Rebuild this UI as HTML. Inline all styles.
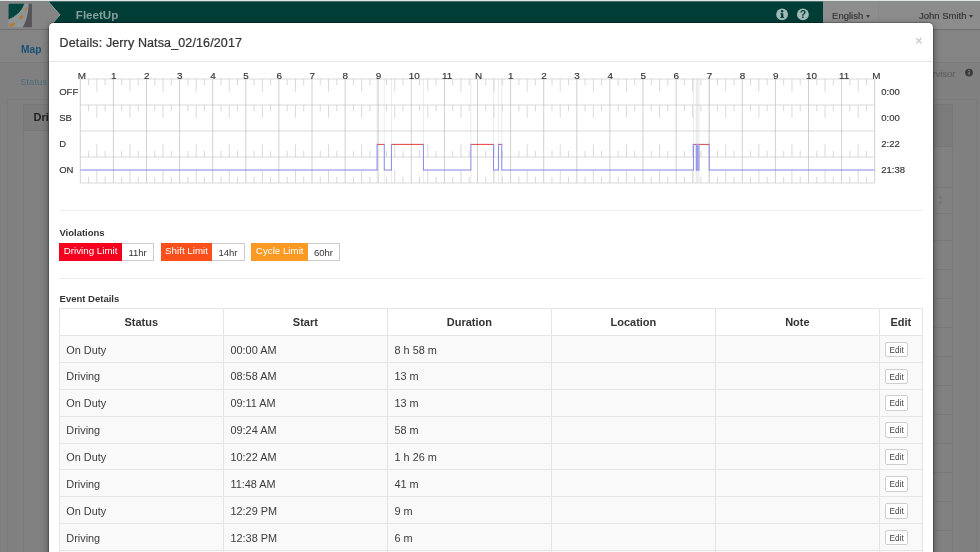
<!DOCTYPE html>
<html><head><meta charset="utf-8"><title>FleetUp</title>
<style>
html,body{margin:0;padding:0}
body{width:980px;height:552px;overflow:hidden;position:relative;background:#808080;font-family:"Liberation Sans",sans-serif;color:#333}
.abs{position:absolute}
#topstrip{left:0;top:0;width:980px;height:2px;background:linear-gradient(to bottom,#e1e6e6 0,#e1e6e6 1px,rgba(225,230,230,0.3) 1px,rgba(225,230,230,0.3) 2px)}
#nav{left:0;top:1.2px;width:980px;height:28.3px;background:#003d37}
#navline{left:0;top:29px;width:980px;height:2px;background:linear-gradient(to bottom,#707070 0,#707070 1px,#777 1px,#777 2px)}
#logo{left:0;top:0;width:62px;height:28.3px}
#brand{left:75.8px;top:8.2px;font-size:11.6px;font-weight:bold;color:#86a09c;line-height:14px;white-space:nowrap}
#lang{left:823.3px;top:0;width:55px;height:28.3px;background:#8e8e8e}
#user{left:878.3px;top:0;width:101.7px;height:28.3px;background:#8c8c8c;border-left:0.7px solid #888}
.navtxt{font-size:9.5px;color:#333;-webkit-text-stroke:0.15px #333;line-height:12px;white-space:nowrap;top:9.1px}
.caret{display:inline-block;width:0;height:0;border-left:2.6px solid transparent;border-right:2.6px solid transparent;border-top:3px solid #3c3c3c;vertical-align:middle;margin-left:2.5px}
#subnav{left:0;top:30.2px;width:980px;height:31.5px;background:#848484}
#subline{left:0;top:61.7px;width:980px;height:0.8px;background:#7a7a7a}
#map{left:21px;top:44.2px;font-size:10.2px;font-weight:bold;color:#1a5078;line-height:12px}
#status{left:20px;top:75.8px;font-size:9.5px;color:#4f6d7c;line-height:12px}
#sup{left:855px;width:100.5px;text-align:right;top:67.8px;font-size:9.5px;color:#606060;-webkit-text-stroke:0.15px #606060;line-height:12px}
#panel{left:7px;top:99px;width:967.5px;height:470px;border:0.8px solid #7a7a7a;background:#808080}
#inner{left:22.5px;top:103.8px;width:928.4px;height:470px;border:0.8px solid #797979;background:#818181}
#ihead{left:22.5px;top:103.8px;width:40px;height:25.2px;background:#7c7c7c;border:0.8px solid #777}
#ihead2{left:920px;top:103.8px;width:30.9px;height:41.2px;background:#7b7b7b;border:0.8px solid #777}
.rline{left:920px;width:31.7px;height:0.8px;background:#797979}
#dri{left:33.6px;top:110.5px;font-size:11px;font-weight:bold;color:#222;line-height:13px}
#modal{left:49.2px;top:22.8px;width:883.8px;height:560px;background:#fff;border-radius:4.2px;box-shadow:0 2px 7px rgba(0,0,0,.5),0 0 0 0.7px rgba(0,0,0,.25)}
#title{left:59.6px;top:36.4px;font-size:12.5px;letter-spacing:0.126px;color:#333;line-height:15px;white-space:nowrap;font-weight:normal;margin:0;-webkit-text-stroke:0.22px #333}
#close{left:915.2px;top:34.2px;font-size:12.4px;font-weight:bold;color:#cbcbcb;line-height:15px}
.hr{height:0.8px;background:#ededed}
.hl{font-size:9.9px;fill:#333;stroke:#333;stroke-width:0.15px;font-family:"Liberation Sans",sans-serif}
.rl{font-size:9.5px;fill:#333;stroke:#333;stroke-width:0.15px;font-family:"Liberation Sans",sans-serif}
.h5{font-size:9.5px;font-weight:bold;color:#333;line-height:12px;white-space:nowrap;margin:0}
.bd{top:242.8px;height:18px;color:#fff;font-size:9.75px;line-height:16.2px;text-align:center;white-space:nowrap}
.bx{top:242.8px;height:16.6px;border:0.7px solid #ccc;border-left:none;background:#fff;color:#333;font-size:9.5px;line-height:17.4px;text-align:center;white-space:nowrap}
table{position:absolute;left:58.7px;top:308.4px;border-collapse:collapse;table-layout:fixed;width:863px;font-size:10.9px;color:#333}
th,td{border:0.8px solid #e5e5e5;padding:0 0 0 6.6px;height:26.1px;box-sizing:border-box;white-space:nowrap;overflow:hidden}
th{font-size:11px;font-weight:bold;text-align:center;padding:0.4px 0 0 0;height:26.6px;background:#fff}
td{background:#f9f9f9;height:26.9px;padding-top:1.2px;color:#3c3c3c}
td.ec{padding:0 0 0 5.4px}
.eb{display:inline-block;width:20.8px;height:13.6px;border:0.7px solid #cfcfcf;border-radius:2px;background:#fff;font-size:8.2px;line-height:15.4px;text-align:center;color:#444;vertical-align:middle;position:relative;top:0.5px;overflow:hidden}
</style></head><body><div id="wrap" style="position:absolute;left:0;top:0;width:980px;height:552px;overflow:hidden;will-change:transform;filter:blur(0.35px)">
<div class="abs" id="nav"></div>
<div class="abs" id="topstrip"></div>
<div class="abs" id="navline"></div>
<svg class="abs" id="logo" style="top:1.2px" width="62" height="28.3" viewBox="0 0 62 28.3">
<polygon points="0,0 47.8,0 60,13.8 47.8,28.3 0,28.3" fill="#858585"/>
<polyline points="47.8,0 60,13.8 47.8,28.3" fill="none" stroke="#9aa5a3" stroke-width="0.9"/>
<g transform="translate(8.55,2.8)">
<path d="M1.2,0 H15.9 Q12.5,10.5 0,15.8 V1.2 Q0,0 1.2,0 Z" fill="#00463f"/>
<path d="M15.9,0 H20.2 Q20,13 14.4,23.5 H0 V15.8 Q12.5,10.5 15.9,0 Z" fill="#8d9695"/>
<path d="M20.2,0 H23.4 V23.5 H14.4 Q20,13 20.2,0 Z" fill="#565458"/>
<ellipse cx="17.3" cy="5.2" rx="0.9" ry="2.1" transform="rotate(14 17.3 5.2)" fill="#b9762f"/>
<ellipse cx="12.8" cy="13.4" rx="1.5" ry="2.4" transform="rotate(38 12.8 13.4)" fill="#b9762f"/>
<ellipse cx="3.6" cy="21" rx="3.2" ry="1.5" transform="rotate(-22 3.6 21)" fill="#b9762f"/>
</g>
</svg>
<div class="abs" id="brand">FleetUp</div>
<svg class="abs" style="left:774px;top:7.3px" width="38" height="15" viewBox="0 0 38 15">
<circle cx="8.1" cy="7.4" r="5.9" fill="#a3bbb7"/><rect x="7.1" y="6.3" width="2.2" height="4.4" fill="#003d37"/><rect x="6.3" y="6.3" width="1.8" height="1" fill="#003d37"/><rect x="6.2" y="9.9" width="3.9" height="1" fill="#003d37"/><circle cx="8.1" cy="4.3" r="1.25" fill="#003d37"/>
<circle cx="28.9" cy="7.4" r="5.9" fill="#a3bbb7"/><text x="28.9" y="11.2" text-anchor="middle" font-size="10.6" font-weight="bold" font-family="Liberation Sans, sans-serif" fill="#003d37">?</text>
</svg>
<div class="abs" id="lang" style="top:1.2px"><span class="abs navtxt" style="left:8.8px">English<span class="caret"></span></span></div>
<div class="abs" id="user" style="top:1.2px"><span class="abs navtxt" style="left:39.6px">John Smith<span class="caret"></span></span></div>
<div class="abs" id="subnav"></div>
<div class="abs" id="subline"></div>
<div class="abs" id="map">Map</div>
<div class="abs" id="status">Status</div>
<div class="abs" id="sup">Supervisor</div>
<svg class="abs" style="left:964px;top:68px" width="10" height="10" viewBox="0 0 10 10"><circle cx="5" cy="4.6" r="3.9" fill="#3c3c3c"/><rect x="4.4" y="3.9" width="1.3" height="2.8" fill="#808080"/><circle cx="5" cy="2.6" r="0.8" fill="#808080"/></svg>
<div class="abs" id="panel"></div>
<div class="abs" id="inner"></div>
<div class="abs" id="ihead"></div><div class="abs" id="ihead2"></div><div class="abs rline" style="top:186.5px"></div><div class="abs rline" style="top:212.6px"></div><div class="abs rline" style="top:240px"></div><div class="abs rline" style="top:269px"></div><div class="abs rline" style="top:298px"></div><div class="abs rline" style="top:327px"></div><div class="abs rline" style="top:356px"></div><div class="abs rline" style="top:385px"></div><div class="abs rline" style="top:414px"></div><div class="abs rline" style="top:443px"></div><div class="abs rline" style="top:472px"></div><div class="abs rline" style="top:501px"></div><div class="abs rline" style="top:530px"></div><svg class="abs" style="left:937px;top:194px" width="7" height="12" viewBox="0 0 7 12"><path d="M3.5,1.5 L5.8,4.8 H1.2 Z M3.5,10.5 L5.8,7.2 H1.2 Z" fill="#757575"/></svg>
<div class="abs" id="dri">Driver</div>
<div class="abs" id="modal"></div>
<h4 class="abs" id="title">Details: Jerry Natsa_02/16/2017</h4>
<div class="abs" id="close">×</div>
<div class="abs hr" style="left:49.2px;top:61.4px;width:883.8px;background:#e6e6e6"></div>
<svg class="chart" width="980" height="200" viewBox="0 0 980 200" style="position:absolute;left:0;top:0">
<line x1="377.10" y1="79.0" x2="377.10" y2="183.0" stroke="#e6e6e6" stroke-width="0.75"/>
<line x1="384.27" y1="79.0" x2="384.27" y2="183.0" stroke="#e6e6e6" stroke-width="0.75"/>
<line x1="391.44" y1="79.0" x2="391.44" y2="183.0" stroke="#e6e6e6" stroke-width="0.75"/>
<line x1="423.44" y1="79.0" x2="423.44" y2="183.0" stroke="#e6e6e6" stroke-width="0.75"/>
<line x1="470.88" y1="79.0" x2="470.88" y2="183.0" stroke="#e6e6e6" stroke-width="0.75"/>
<line x1="493.50" y1="79.0" x2="493.50" y2="183.0" stroke="#e6e6e6" stroke-width="0.75"/>
<line x1="498.46" y1="79.0" x2="498.46" y2="183.0" stroke="#e6e6e6" stroke-width="0.75"/>
<line x1="501.77" y1="79.0" x2="501.77" y2="183.0" stroke="#e6e6e6" stroke-width="0.75"/>
<line x1="693.48" y1="79.0" x2="693.48" y2="183.0" stroke="#e6e6e6" stroke-width="0.75"/>
<line x1="696.24" y1="79.0" x2="696.24" y2="183.0" stroke="#e6e6e6" stroke-width="0.75"/>
<line x1="697.06" y1="79.0" x2="697.06" y2="183.0" stroke="#e6e6e6" stroke-width="0.75"/>
<line x1="697.89" y1="79.0" x2="697.89" y2="183.0" stroke="#e6e6e6" stroke-width="0.75"/>
<line x1="698.99" y1="79.0" x2="698.99" y2="183.0" stroke="#e6e6e6" stroke-width="0.75"/>
<line x1="709.20" y1="79.0" x2="709.20" y2="183.0" stroke="#e6e6e6" stroke-width="0.75"/>
<line x1="80.3" y1="79.0" x2="874.70" y2="79.0" stroke="#cccccc" stroke-width="0.75"/>
<line x1="80.3" y1="105.0" x2="874.70" y2="105.0" stroke="#cccccc" stroke-width="0.75"/>
<line x1="80.3" y1="131.0" x2="874.70" y2="131.0" stroke="#cccccc" stroke-width="0.75"/>
<line x1="80.3" y1="157.0" x2="874.70" y2="157.0" stroke="#cccccc" stroke-width="0.75"/>
<line x1="80.3" y1="183.0" x2="874.70" y2="183.0" stroke="#cccccc" stroke-width="0.75"/>
<line x1="80.30" y1="79.0" x2="80.30" y2="183.0" stroke="#c2c2c2" stroke-width="0.75"/>
<line x1="113.40" y1="79.0" x2="113.40" y2="183.0" stroke="#c2c2c2" stroke-width="0.75"/>
<line x1="146.50" y1="79.0" x2="146.50" y2="183.0" stroke="#c2c2c2" stroke-width="0.75"/>
<line x1="179.60" y1="79.0" x2="179.60" y2="183.0" stroke="#c2c2c2" stroke-width="0.75"/>
<line x1="212.70" y1="79.0" x2="212.70" y2="183.0" stroke="#c2c2c2" stroke-width="0.75"/>
<line x1="245.80" y1="79.0" x2="245.80" y2="183.0" stroke="#c2c2c2" stroke-width="0.75"/>
<line x1="278.90" y1="79.0" x2="278.90" y2="183.0" stroke="#c2c2c2" stroke-width="0.75"/>
<line x1="312.00" y1="79.0" x2="312.00" y2="183.0" stroke="#c2c2c2" stroke-width="0.75"/>
<line x1="345.10" y1="79.0" x2="345.10" y2="183.0" stroke="#c2c2c2" stroke-width="0.75"/>
<line x1="378.20" y1="79.0" x2="378.20" y2="183.0" stroke="#c2c2c2" stroke-width="0.75"/>
<line x1="411.30" y1="79.0" x2="411.30" y2="183.0" stroke="#c2c2c2" stroke-width="0.75"/>
<line x1="444.40" y1="79.0" x2="444.40" y2="183.0" stroke="#c2c2c2" stroke-width="0.75"/>
<line x1="477.50" y1="79.0" x2="477.50" y2="183.0" stroke="#c2c2c2" stroke-width="0.75"/>
<line x1="510.60" y1="79.0" x2="510.60" y2="183.0" stroke="#c2c2c2" stroke-width="0.75"/>
<line x1="543.70" y1="79.0" x2="543.70" y2="183.0" stroke="#c2c2c2" stroke-width="0.75"/>
<line x1="576.80" y1="79.0" x2="576.80" y2="183.0" stroke="#c2c2c2" stroke-width="0.75"/>
<line x1="609.90" y1="79.0" x2="609.90" y2="183.0" stroke="#c2c2c2" stroke-width="0.75"/>
<line x1="643.00" y1="79.0" x2="643.00" y2="183.0" stroke="#c2c2c2" stroke-width="0.75"/>
<line x1="676.10" y1="79.0" x2="676.10" y2="183.0" stroke="#c2c2c2" stroke-width="0.75"/>
<line x1="709.20" y1="79.0" x2="709.20" y2="183.0" stroke="#c2c2c2" stroke-width="0.75"/>
<line x1="742.30" y1="79.0" x2="742.30" y2="183.0" stroke="#c2c2c2" stroke-width="0.75"/>
<line x1="775.40" y1="79.0" x2="775.40" y2="183.0" stroke="#c2c2c2" stroke-width="0.75"/>
<line x1="808.50" y1="79.0" x2="808.50" y2="183.0" stroke="#c2c2c2" stroke-width="0.75"/>
<line x1="841.60" y1="79.0" x2="841.60" y2="183.0" stroke="#c2c2c2" stroke-width="0.75"/>
<line x1="874.70" y1="79.0" x2="874.70" y2="183.0" stroke="#c2c2c2" stroke-width="0.75"/>
<line x1="88.58" y1="79.00" x2="88.58" y2="85.30" stroke="#cdcdcd" stroke-width="0.75"/>
<line x1="88.58" y1="105.00" x2="88.58" y2="111.30" stroke="#cdcdcd" stroke-width="0.75"/>
<line x1="88.58" y1="157.00" x2="88.58" y2="150.70" stroke="#cdcdcd" stroke-width="0.75"/>
<line x1="88.58" y1="183.00" x2="88.58" y2="176.70" stroke="#cdcdcd" stroke-width="0.75"/>
<line x1="96.85" y1="79.00" x2="96.85" y2="91.70" stroke="#cdcdcd" stroke-width="0.75"/>
<line x1="96.85" y1="105.00" x2="96.85" y2="117.70" stroke="#cdcdcd" stroke-width="0.75"/>
<line x1="96.85" y1="157.00" x2="96.85" y2="144.30" stroke="#cdcdcd" stroke-width="0.75"/>
<line x1="96.85" y1="183.00" x2="96.85" y2="170.30" stroke="#cdcdcd" stroke-width="0.75"/>
<line x1="105.12" y1="79.00" x2="105.12" y2="85.30" stroke="#cdcdcd" stroke-width="0.75"/>
<line x1="105.12" y1="105.00" x2="105.12" y2="111.30" stroke="#cdcdcd" stroke-width="0.75"/>
<line x1="105.12" y1="157.00" x2="105.12" y2="150.70" stroke="#cdcdcd" stroke-width="0.75"/>
<line x1="105.12" y1="183.00" x2="105.12" y2="176.70" stroke="#cdcdcd" stroke-width="0.75"/>
<line x1="121.67" y1="79.00" x2="121.67" y2="85.30" stroke="#cdcdcd" stroke-width="0.75"/>
<line x1="121.67" y1="105.00" x2="121.67" y2="111.30" stroke="#cdcdcd" stroke-width="0.75"/>
<line x1="121.67" y1="157.00" x2="121.67" y2="150.70" stroke="#cdcdcd" stroke-width="0.75"/>
<line x1="121.67" y1="183.00" x2="121.67" y2="176.70" stroke="#cdcdcd" stroke-width="0.75"/>
<line x1="129.95" y1="79.00" x2="129.95" y2="91.70" stroke="#cdcdcd" stroke-width="0.75"/>
<line x1="129.95" y1="105.00" x2="129.95" y2="117.70" stroke="#cdcdcd" stroke-width="0.75"/>
<line x1="129.95" y1="157.00" x2="129.95" y2="144.30" stroke="#cdcdcd" stroke-width="0.75"/>
<line x1="129.95" y1="183.00" x2="129.95" y2="170.30" stroke="#cdcdcd" stroke-width="0.75"/>
<line x1="138.22" y1="79.00" x2="138.22" y2="85.30" stroke="#cdcdcd" stroke-width="0.75"/>
<line x1="138.22" y1="105.00" x2="138.22" y2="111.30" stroke="#cdcdcd" stroke-width="0.75"/>
<line x1="138.22" y1="157.00" x2="138.22" y2="150.70" stroke="#cdcdcd" stroke-width="0.75"/>
<line x1="138.22" y1="183.00" x2="138.22" y2="176.70" stroke="#cdcdcd" stroke-width="0.75"/>
<line x1="154.78" y1="79.00" x2="154.78" y2="85.30" stroke="#cdcdcd" stroke-width="0.75"/>
<line x1="154.78" y1="105.00" x2="154.78" y2="111.30" stroke="#cdcdcd" stroke-width="0.75"/>
<line x1="154.78" y1="157.00" x2="154.78" y2="150.70" stroke="#cdcdcd" stroke-width="0.75"/>
<line x1="154.78" y1="183.00" x2="154.78" y2="176.70" stroke="#cdcdcd" stroke-width="0.75"/>
<line x1="163.05" y1="79.00" x2="163.05" y2="91.70" stroke="#cdcdcd" stroke-width="0.75"/>
<line x1="163.05" y1="105.00" x2="163.05" y2="117.70" stroke="#cdcdcd" stroke-width="0.75"/>
<line x1="163.05" y1="157.00" x2="163.05" y2="144.30" stroke="#cdcdcd" stroke-width="0.75"/>
<line x1="163.05" y1="183.00" x2="163.05" y2="170.30" stroke="#cdcdcd" stroke-width="0.75"/>
<line x1="171.32" y1="79.00" x2="171.32" y2="85.30" stroke="#cdcdcd" stroke-width="0.75"/>
<line x1="171.32" y1="105.00" x2="171.32" y2="111.30" stroke="#cdcdcd" stroke-width="0.75"/>
<line x1="171.32" y1="157.00" x2="171.32" y2="150.70" stroke="#cdcdcd" stroke-width="0.75"/>
<line x1="171.32" y1="183.00" x2="171.32" y2="176.70" stroke="#cdcdcd" stroke-width="0.75"/>
<line x1="187.88" y1="79.00" x2="187.88" y2="85.30" stroke="#cdcdcd" stroke-width="0.75"/>
<line x1="187.88" y1="105.00" x2="187.88" y2="111.30" stroke="#cdcdcd" stroke-width="0.75"/>
<line x1="187.88" y1="157.00" x2="187.88" y2="150.70" stroke="#cdcdcd" stroke-width="0.75"/>
<line x1="187.88" y1="183.00" x2="187.88" y2="176.70" stroke="#cdcdcd" stroke-width="0.75"/>
<line x1="196.15" y1="79.00" x2="196.15" y2="91.70" stroke="#cdcdcd" stroke-width="0.75"/>
<line x1="196.15" y1="105.00" x2="196.15" y2="117.70" stroke="#cdcdcd" stroke-width="0.75"/>
<line x1="196.15" y1="157.00" x2="196.15" y2="144.30" stroke="#cdcdcd" stroke-width="0.75"/>
<line x1="196.15" y1="183.00" x2="196.15" y2="170.30" stroke="#cdcdcd" stroke-width="0.75"/>
<line x1="204.43" y1="79.00" x2="204.43" y2="85.30" stroke="#cdcdcd" stroke-width="0.75"/>
<line x1="204.43" y1="105.00" x2="204.43" y2="111.30" stroke="#cdcdcd" stroke-width="0.75"/>
<line x1="204.43" y1="157.00" x2="204.43" y2="150.70" stroke="#cdcdcd" stroke-width="0.75"/>
<line x1="204.43" y1="183.00" x2="204.43" y2="176.70" stroke="#cdcdcd" stroke-width="0.75"/>
<line x1="220.98" y1="79.00" x2="220.98" y2="85.30" stroke="#cdcdcd" stroke-width="0.75"/>
<line x1="220.98" y1="105.00" x2="220.98" y2="111.30" stroke="#cdcdcd" stroke-width="0.75"/>
<line x1="220.98" y1="157.00" x2="220.98" y2="150.70" stroke="#cdcdcd" stroke-width="0.75"/>
<line x1="220.98" y1="183.00" x2="220.98" y2="176.70" stroke="#cdcdcd" stroke-width="0.75"/>
<line x1="229.25" y1="79.00" x2="229.25" y2="91.70" stroke="#cdcdcd" stroke-width="0.75"/>
<line x1="229.25" y1="105.00" x2="229.25" y2="117.70" stroke="#cdcdcd" stroke-width="0.75"/>
<line x1="229.25" y1="157.00" x2="229.25" y2="144.30" stroke="#cdcdcd" stroke-width="0.75"/>
<line x1="229.25" y1="183.00" x2="229.25" y2="170.30" stroke="#cdcdcd" stroke-width="0.75"/>
<line x1="237.52" y1="79.00" x2="237.52" y2="85.30" stroke="#cdcdcd" stroke-width="0.75"/>
<line x1="237.52" y1="105.00" x2="237.52" y2="111.30" stroke="#cdcdcd" stroke-width="0.75"/>
<line x1="237.52" y1="157.00" x2="237.52" y2="150.70" stroke="#cdcdcd" stroke-width="0.75"/>
<line x1="237.52" y1="183.00" x2="237.52" y2="176.70" stroke="#cdcdcd" stroke-width="0.75"/>
<line x1="254.07" y1="79.00" x2="254.07" y2="85.30" stroke="#cdcdcd" stroke-width="0.75"/>
<line x1="254.07" y1="105.00" x2="254.07" y2="111.30" stroke="#cdcdcd" stroke-width="0.75"/>
<line x1="254.07" y1="157.00" x2="254.07" y2="150.70" stroke="#cdcdcd" stroke-width="0.75"/>
<line x1="254.07" y1="183.00" x2="254.07" y2="176.70" stroke="#cdcdcd" stroke-width="0.75"/>
<line x1="262.35" y1="79.00" x2="262.35" y2="91.70" stroke="#cdcdcd" stroke-width="0.75"/>
<line x1="262.35" y1="105.00" x2="262.35" y2="117.70" stroke="#cdcdcd" stroke-width="0.75"/>
<line x1="262.35" y1="157.00" x2="262.35" y2="144.30" stroke="#cdcdcd" stroke-width="0.75"/>
<line x1="262.35" y1="183.00" x2="262.35" y2="170.30" stroke="#cdcdcd" stroke-width="0.75"/>
<line x1="270.62" y1="79.00" x2="270.62" y2="85.30" stroke="#cdcdcd" stroke-width="0.75"/>
<line x1="270.62" y1="105.00" x2="270.62" y2="111.30" stroke="#cdcdcd" stroke-width="0.75"/>
<line x1="270.62" y1="157.00" x2="270.62" y2="150.70" stroke="#cdcdcd" stroke-width="0.75"/>
<line x1="270.62" y1="183.00" x2="270.62" y2="176.70" stroke="#cdcdcd" stroke-width="0.75"/>
<line x1="287.18" y1="79.00" x2="287.18" y2="85.30" stroke="#cdcdcd" stroke-width="0.75"/>
<line x1="287.18" y1="105.00" x2="287.18" y2="111.30" stroke="#cdcdcd" stroke-width="0.75"/>
<line x1="287.18" y1="157.00" x2="287.18" y2="150.70" stroke="#cdcdcd" stroke-width="0.75"/>
<line x1="287.18" y1="183.00" x2="287.18" y2="176.70" stroke="#cdcdcd" stroke-width="0.75"/>
<line x1="295.45" y1="79.00" x2="295.45" y2="91.70" stroke="#cdcdcd" stroke-width="0.75"/>
<line x1="295.45" y1="105.00" x2="295.45" y2="117.70" stroke="#cdcdcd" stroke-width="0.75"/>
<line x1="295.45" y1="157.00" x2="295.45" y2="144.30" stroke="#cdcdcd" stroke-width="0.75"/>
<line x1="295.45" y1="183.00" x2="295.45" y2="170.30" stroke="#cdcdcd" stroke-width="0.75"/>
<line x1="303.73" y1="79.00" x2="303.73" y2="85.30" stroke="#cdcdcd" stroke-width="0.75"/>
<line x1="303.73" y1="105.00" x2="303.73" y2="111.30" stroke="#cdcdcd" stroke-width="0.75"/>
<line x1="303.73" y1="157.00" x2="303.73" y2="150.70" stroke="#cdcdcd" stroke-width="0.75"/>
<line x1="303.73" y1="183.00" x2="303.73" y2="176.70" stroke="#cdcdcd" stroke-width="0.75"/>
<line x1="320.28" y1="79.00" x2="320.28" y2="85.30" stroke="#cdcdcd" stroke-width="0.75"/>
<line x1="320.28" y1="105.00" x2="320.28" y2="111.30" stroke="#cdcdcd" stroke-width="0.75"/>
<line x1="320.28" y1="157.00" x2="320.28" y2="150.70" stroke="#cdcdcd" stroke-width="0.75"/>
<line x1="320.28" y1="183.00" x2="320.28" y2="176.70" stroke="#cdcdcd" stroke-width="0.75"/>
<line x1="328.55" y1="79.00" x2="328.55" y2="91.70" stroke="#cdcdcd" stroke-width="0.75"/>
<line x1="328.55" y1="105.00" x2="328.55" y2="117.70" stroke="#cdcdcd" stroke-width="0.75"/>
<line x1="328.55" y1="157.00" x2="328.55" y2="144.30" stroke="#cdcdcd" stroke-width="0.75"/>
<line x1="328.55" y1="183.00" x2="328.55" y2="170.30" stroke="#cdcdcd" stroke-width="0.75"/>
<line x1="336.83" y1="79.00" x2="336.83" y2="85.30" stroke="#cdcdcd" stroke-width="0.75"/>
<line x1="336.83" y1="105.00" x2="336.83" y2="111.30" stroke="#cdcdcd" stroke-width="0.75"/>
<line x1="336.83" y1="157.00" x2="336.83" y2="150.70" stroke="#cdcdcd" stroke-width="0.75"/>
<line x1="336.83" y1="183.00" x2="336.83" y2="176.70" stroke="#cdcdcd" stroke-width="0.75"/>
<line x1="353.38" y1="79.00" x2="353.38" y2="85.30" stroke="#cdcdcd" stroke-width="0.75"/>
<line x1="353.38" y1="105.00" x2="353.38" y2="111.30" stroke="#cdcdcd" stroke-width="0.75"/>
<line x1="353.38" y1="157.00" x2="353.38" y2="150.70" stroke="#cdcdcd" stroke-width="0.75"/>
<line x1="353.38" y1="183.00" x2="353.38" y2="176.70" stroke="#cdcdcd" stroke-width="0.75"/>
<line x1="361.65" y1="79.00" x2="361.65" y2="91.70" stroke="#cdcdcd" stroke-width="0.75"/>
<line x1="361.65" y1="105.00" x2="361.65" y2="117.70" stroke="#cdcdcd" stroke-width="0.75"/>
<line x1="361.65" y1="157.00" x2="361.65" y2="144.30" stroke="#cdcdcd" stroke-width="0.75"/>
<line x1="361.65" y1="183.00" x2="361.65" y2="170.30" stroke="#cdcdcd" stroke-width="0.75"/>
<line x1="369.93" y1="79.00" x2="369.93" y2="85.30" stroke="#cdcdcd" stroke-width="0.75"/>
<line x1="369.93" y1="105.00" x2="369.93" y2="111.30" stroke="#cdcdcd" stroke-width="0.75"/>
<line x1="369.93" y1="157.00" x2="369.93" y2="150.70" stroke="#cdcdcd" stroke-width="0.75"/>
<line x1="369.93" y1="183.00" x2="369.93" y2="176.70" stroke="#cdcdcd" stroke-width="0.75"/>
<line x1="386.48" y1="79.00" x2="386.48" y2="85.30" stroke="#cdcdcd" stroke-width="0.75"/>
<line x1="386.48" y1="105.00" x2="386.48" y2="111.30" stroke="#cdcdcd" stroke-width="0.75"/>
<line x1="386.48" y1="157.00" x2="386.48" y2="150.70" stroke="#cdcdcd" stroke-width="0.75"/>
<line x1="386.48" y1="183.00" x2="386.48" y2="176.70" stroke="#cdcdcd" stroke-width="0.75"/>
<line x1="394.75" y1="79.00" x2="394.75" y2="91.70" stroke="#cdcdcd" stroke-width="0.75"/>
<line x1="394.75" y1="105.00" x2="394.75" y2="117.70" stroke="#cdcdcd" stroke-width="0.75"/>
<line x1="394.75" y1="157.00" x2="394.75" y2="144.30" stroke="#cdcdcd" stroke-width="0.75"/>
<line x1="394.75" y1="183.00" x2="394.75" y2="170.30" stroke="#cdcdcd" stroke-width="0.75"/>
<line x1="403.03" y1="79.00" x2="403.03" y2="85.30" stroke="#cdcdcd" stroke-width="0.75"/>
<line x1="403.03" y1="105.00" x2="403.03" y2="111.30" stroke="#cdcdcd" stroke-width="0.75"/>
<line x1="403.03" y1="157.00" x2="403.03" y2="150.70" stroke="#cdcdcd" stroke-width="0.75"/>
<line x1="403.03" y1="183.00" x2="403.03" y2="176.70" stroke="#cdcdcd" stroke-width="0.75"/>
<line x1="419.58" y1="79.00" x2="419.58" y2="85.30" stroke="#cdcdcd" stroke-width="0.75"/>
<line x1="419.58" y1="105.00" x2="419.58" y2="111.30" stroke="#cdcdcd" stroke-width="0.75"/>
<line x1="419.58" y1="157.00" x2="419.58" y2="150.70" stroke="#cdcdcd" stroke-width="0.75"/>
<line x1="419.58" y1="183.00" x2="419.58" y2="176.70" stroke="#cdcdcd" stroke-width="0.75"/>
<line x1="427.85" y1="79.00" x2="427.85" y2="91.70" stroke="#cdcdcd" stroke-width="0.75"/>
<line x1="427.85" y1="105.00" x2="427.85" y2="117.70" stroke="#cdcdcd" stroke-width="0.75"/>
<line x1="427.85" y1="157.00" x2="427.85" y2="144.30" stroke="#cdcdcd" stroke-width="0.75"/>
<line x1="427.85" y1="183.00" x2="427.85" y2="170.30" stroke="#cdcdcd" stroke-width="0.75"/>
<line x1="436.12" y1="79.00" x2="436.12" y2="85.30" stroke="#cdcdcd" stroke-width="0.75"/>
<line x1="436.12" y1="105.00" x2="436.12" y2="111.30" stroke="#cdcdcd" stroke-width="0.75"/>
<line x1="436.12" y1="157.00" x2="436.12" y2="150.70" stroke="#cdcdcd" stroke-width="0.75"/>
<line x1="436.12" y1="183.00" x2="436.12" y2="176.70" stroke="#cdcdcd" stroke-width="0.75"/>
<line x1="452.68" y1="79.00" x2="452.68" y2="85.30" stroke="#cdcdcd" stroke-width="0.75"/>
<line x1="452.68" y1="105.00" x2="452.68" y2="111.30" stroke="#cdcdcd" stroke-width="0.75"/>
<line x1="452.68" y1="157.00" x2="452.68" y2="150.70" stroke="#cdcdcd" stroke-width="0.75"/>
<line x1="452.68" y1="183.00" x2="452.68" y2="176.70" stroke="#cdcdcd" stroke-width="0.75"/>
<line x1="460.95" y1="79.00" x2="460.95" y2="91.70" stroke="#cdcdcd" stroke-width="0.75"/>
<line x1="460.95" y1="105.00" x2="460.95" y2="117.70" stroke="#cdcdcd" stroke-width="0.75"/>
<line x1="460.95" y1="157.00" x2="460.95" y2="144.30" stroke="#cdcdcd" stroke-width="0.75"/>
<line x1="460.95" y1="183.00" x2="460.95" y2="170.30" stroke="#cdcdcd" stroke-width="0.75"/>
<line x1="469.23" y1="79.00" x2="469.23" y2="85.30" stroke="#cdcdcd" stroke-width="0.75"/>
<line x1="469.23" y1="105.00" x2="469.23" y2="111.30" stroke="#cdcdcd" stroke-width="0.75"/>
<line x1="469.23" y1="157.00" x2="469.23" y2="150.70" stroke="#cdcdcd" stroke-width="0.75"/>
<line x1="469.23" y1="183.00" x2="469.23" y2="176.70" stroke="#cdcdcd" stroke-width="0.75"/>
<line x1="485.78" y1="79.00" x2="485.78" y2="85.30" stroke="#cdcdcd" stroke-width="0.75"/>
<line x1="485.78" y1="105.00" x2="485.78" y2="111.30" stroke="#cdcdcd" stroke-width="0.75"/>
<line x1="485.78" y1="157.00" x2="485.78" y2="150.70" stroke="#cdcdcd" stroke-width="0.75"/>
<line x1="485.78" y1="183.00" x2="485.78" y2="176.70" stroke="#cdcdcd" stroke-width="0.75"/>
<line x1="494.05" y1="79.00" x2="494.05" y2="91.70" stroke="#cdcdcd" stroke-width="0.75"/>
<line x1="494.05" y1="105.00" x2="494.05" y2="117.70" stroke="#cdcdcd" stroke-width="0.75"/>
<line x1="494.05" y1="157.00" x2="494.05" y2="144.30" stroke="#cdcdcd" stroke-width="0.75"/>
<line x1="494.05" y1="183.00" x2="494.05" y2="170.30" stroke="#cdcdcd" stroke-width="0.75"/>
<line x1="502.33" y1="79.00" x2="502.33" y2="85.30" stroke="#cdcdcd" stroke-width="0.75"/>
<line x1="502.33" y1="105.00" x2="502.33" y2="111.30" stroke="#cdcdcd" stroke-width="0.75"/>
<line x1="502.33" y1="157.00" x2="502.33" y2="150.70" stroke="#cdcdcd" stroke-width="0.75"/>
<line x1="502.33" y1="183.00" x2="502.33" y2="176.70" stroke="#cdcdcd" stroke-width="0.75"/>
<line x1="518.88" y1="79.00" x2="518.88" y2="85.30" stroke="#cdcdcd" stroke-width="0.75"/>
<line x1="518.88" y1="105.00" x2="518.88" y2="111.30" stroke="#cdcdcd" stroke-width="0.75"/>
<line x1="518.88" y1="157.00" x2="518.88" y2="150.70" stroke="#cdcdcd" stroke-width="0.75"/>
<line x1="518.88" y1="183.00" x2="518.88" y2="176.70" stroke="#cdcdcd" stroke-width="0.75"/>
<line x1="527.15" y1="79.00" x2="527.15" y2="91.70" stroke="#cdcdcd" stroke-width="0.75"/>
<line x1="527.15" y1="105.00" x2="527.15" y2="117.70" stroke="#cdcdcd" stroke-width="0.75"/>
<line x1="527.15" y1="157.00" x2="527.15" y2="144.30" stroke="#cdcdcd" stroke-width="0.75"/>
<line x1="527.15" y1="183.00" x2="527.15" y2="170.30" stroke="#cdcdcd" stroke-width="0.75"/>
<line x1="535.42" y1="79.00" x2="535.42" y2="85.30" stroke="#cdcdcd" stroke-width="0.75"/>
<line x1="535.42" y1="105.00" x2="535.42" y2="111.30" stroke="#cdcdcd" stroke-width="0.75"/>
<line x1="535.42" y1="157.00" x2="535.42" y2="150.70" stroke="#cdcdcd" stroke-width="0.75"/>
<line x1="535.42" y1="183.00" x2="535.42" y2="176.70" stroke="#cdcdcd" stroke-width="0.75"/>
<line x1="551.98" y1="79.00" x2="551.98" y2="85.30" stroke="#cdcdcd" stroke-width="0.75"/>
<line x1="551.98" y1="105.00" x2="551.98" y2="111.30" stroke="#cdcdcd" stroke-width="0.75"/>
<line x1="551.98" y1="157.00" x2="551.98" y2="150.70" stroke="#cdcdcd" stroke-width="0.75"/>
<line x1="551.98" y1="183.00" x2="551.98" y2="176.70" stroke="#cdcdcd" stroke-width="0.75"/>
<line x1="560.25" y1="79.00" x2="560.25" y2="91.70" stroke="#cdcdcd" stroke-width="0.75"/>
<line x1="560.25" y1="105.00" x2="560.25" y2="117.70" stroke="#cdcdcd" stroke-width="0.75"/>
<line x1="560.25" y1="157.00" x2="560.25" y2="144.30" stroke="#cdcdcd" stroke-width="0.75"/>
<line x1="560.25" y1="183.00" x2="560.25" y2="170.30" stroke="#cdcdcd" stroke-width="0.75"/>
<line x1="568.52" y1="79.00" x2="568.52" y2="85.30" stroke="#cdcdcd" stroke-width="0.75"/>
<line x1="568.52" y1="105.00" x2="568.52" y2="111.30" stroke="#cdcdcd" stroke-width="0.75"/>
<line x1="568.52" y1="157.00" x2="568.52" y2="150.70" stroke="#cdcdcd" stroke-width="0.75"/>
<line x1="568.52" y1="183.00" x2="568.52" y2="176.70" stroke="#cdcdcd" stroke-width="0.75"/>
<line x1="585.08" y1="79.00" x2="585.08" y2="85.30" stroke="#cdcdcd" stroke-width="0.75"/>
<line x1="585.08" y1="105.00" x2="585.08" y2="111.30" stroke="#cdcdcd" stroke-width="0.75"/>
<line x1="585.08" y1="157.00" x2="585.08" y2="150.70" stroke="#cdcdcd" stroke-width="0.75"/>
<line x1="585.08" y1="183.00" x2="585.08" y2="176.70" stroke="#cdcdcd" stroke-width="0.75"/>
<line x1="593.35" y1="79.00" x2="593.35" y2="91.70" stroke="#cdcdcd" stroke-width="0.75"/>
<line x1="593.35" y1="105.00" x2="593.35" y2="117.70" stroke="#cdcdcd" stroke-width="0.75"/>
<line x1="593.35" y1="157.00" x2="593.35" y2="144.30" stroke="#cdcdcd" stroke-width="0.75"/>
<line x1="593.35" y1="183.00" x2="593.35" y2="170.30" stroke="#cdcdcd" stroke-width="0.75"/>
<line x1="601.62" y1="79.00" x2="601.62" y2="85.30" stroke="#cdcdcd" stroke-width="0.75"/>
<line x1="601.62" y1="105.00" x2="601.62" y2="111.30" stroke="#cdcdcd" stroke-width="0.75"/>
<line x1="601.62" y1="157.00" x2="601.62" y2="150.70" stroke="#cdcdcd" stroke-width="0.75"/>
<line x1="601.62" y1="183.00" x2="601.62" y2="176.70" stroke="#cdcdcd" stroke-width="0.75"/>
<line x1="618.17" y1="79.00" x2="618.17" y2="85.30" stroke="#cdcdcd" stroke-width="0.75"/>
<line x1="618.17" y1="105.00" x2="618.17" y2="111.30" stroke="#cdcdcd" stroke-width="0.75"/>
<line x1="618.17" y1="157.00" x2="618.17" y2="150.70" stroke="#cdcdcd" stroke-width="0.75"/>
<line x1="618.17" y1="183.00" x2="618.17" y2="176.70" stroke="#cdcdcd" stroke-width="0.75"/>
<line x1="626.45" y1="79.00" x2="626.45" y2="91.70" stroke="#cdcdcd" stroke-width="0.75"/>
<line x1="626.45" y1="105.00" x2="626.45" y2="117.70" stroke="#cdcdcd" stroke-width="0.75"/>
<line x1="626.45" y1="157.00" x2="626.45" y2="144.30" stroke="#cdcdcd" stroke-width="0.75"/>
<line x1="626.45" y1="183.00" x2="626.45" y2="170.30" stroke="#cdcdcd" stroke-width="0.75"/>
<line x1="634.73" y1="79.00" x2="634.73" y2="85.30" stroke="#cdcdcd" stroke-width="0.75"/>
<line x1="634.73" y1="105.00" x2="634.73" y2="111.30" stroke="#cdcdcd" stroke-width="0.75"/>
<line x1="634.73" y1="157.00" x2="634.73" y2="150.70" stroke="#cdcdcd" stroke-width="0.75"/>
<line x1="634.73" y1="183.00" x2="634.73" y2="176.70" stroke="#cdcdcd" stroke-width="0.75"/>
<line x1="651.27" y1="79.00" x2="651.27" y2="85.30" stroke="#cdcdcd" stroke-width="0.75"/>
<line x1="651.27" y1="105.00" x2="651.27" y2="111.30" stroke="#cdcdcd" stroke-width="0.75"/>
<line x1="651.27" y1="157.00" x2="651.27" y2="150.70" stroke="#cdcdcd" stroke-width="0.75"/>
<line x1="651.27" y1="183.00" x2="651.27" y2="176.70" stroke="#cdcdcd" stroke-width="0.75"/>
<line x1="659.55" y1="79.00" x2="659.55" y2="91.70" stroke="#cdcdcd" stroke-width="0.75"/>
<line x1="659.55" y1="105.00" x2="659.55" y2="117.70" stroke="#cdcdcd" stroke-width="0.75"/>
<line x1="659.55" y1="157.00" x2="659.55" y2="144.30" stroke="#cdcdcd" stroke-width="0.75"/>
<line x1="659.55" y1="183.00" x2="659.55" y2="170.30" stroke="#cdcdcd" stroke-width="0.75"/>
<line x1="667.82" y1="79.00" x2="667.82" y2="85.30" stroke="#cdcdcd" stroke-width="0.75"/>
<line x1="667.82" y1="105.00" x2="667.82" y2="111.30" stroke="#cdcdcd" stroke-width="0.75"/>
<line x1="667.82" y1="157.00" x2="667.82" y2="150.70" stroke="#cdcdcd" stroke-width="0.75"/>
<line x1="667.82" y1="183.00" x2="667.82" y2="176.70" stroke="#cdcdcd" stroke-width="0.75"/>
<line x1="684.38" y1="79.00" x2="684.38" y2="85.30" stroke="#cdcdcd" stroke-width="0.75"/>
<line x1="684.38" y1="105.00" x2="684.38" y2="111.30" stroke="#cdcdcd" stroke-width="0.75"/>
<line x1="684.38" y1="157.00" x2="684.38" y2="150.70" stroke="#cdcdcd" stroke-width="0.75"/>
<line x1="684.38" y1="183.00" x2="684.38" y2="176.70" stroke="#cdcdcd" stroke-width="0.75"/>
<line x1="692.65" y1="79.00" x2="692.65" y2="91.70" stroke="#cdcdcd" stroke-width="0.75"/>
<line x1="692.65" y1="105.00" x2="692.65" y2="117.70" stroke="#cdcdcd" stroke-width="0.75"/>
<line x1="692.65" y1="157.00" x2="692.65" y2="144.30" stroke="#cdcdcd" stroke-width="0.75"/>
<line x1="692.65" y1="183.00" x2="692.65" y2="170.30" stroke="#cdcdcd" stroke-width="0.75"/>
<line x1="700.92" y1="79.00" x2="700.92" y2="85.30" stroke="#cdcdcd" stroke-width="0.75"/>
<line x1="700.92" y1="105.00" x2="700.92" y2="111.30" stroke="#cdcdcd" stroke-width="0.75"/>
<line x1="700.92" y1="157.00" x2="700.92" y2="150.70" stroke="#cdcdcd" stroke-width="0.75"/>
<line x1="700.92" y1="183.00" x2="700.92" y2="176.70" stroke="#cdcdcd" stroke-width="0.75"/>
<line x1="717.48" y1="79.00" x2="717.48" y2="85.30" stroke="#cdcdcd" stroke-width="0.75"/>
<line x1="717.48" y1="105.00" x2="717.48" y2="111.30" stroke="#cdcdcd" stroke-width="0.75"/>
<line x1="717.48" y1="157.00" x2="717.48" y2="150.70" stroke="#cdcdcd" stroke-width="0.75"/>
<line x1="717.48" y1="183.00" x2="717.48" y2="176.70" stroke="#cdcdcd" stroke-width="0.75"/>
<line x1="725.75" y1="79.00" x2="725.75" y2="91.70" stroke="#cdcdcd" stroke-width="0.75"/>
<line x1="725.75" y1="105.00" x2="725.75" y2="117.70" stroke="#cdcdcd" stroke-width="0.75"/>
<line x1="725.75" y1="157.00" x2="725.75" y2="144.30" stroke="#cdcdcd" stroke-width="0.75"/>
<line x1="725.75" y1="183.00" x2="725.75" y2="170.30" stroke="#cdcdcd" stroke-width="0.75"/>
<line x1="734.02" y1="79.00" x2="734.02" y2="85.30" stroke="#cdcdcd" stroke-width="0.75"/>
<line x1="734.02" y1="105.00" x2="734.02" y2="111.30" stroke="#cdcdcd" stroke-width="0.75"/>
<line x1="734.02" y1="157.00" x2="734.02" y2="150.70" stroke="#cdcdcd" stroke-width="0.75"/>
<line x1="734.02" y1="183.00" x2="734.02" y2="176.70" stroke="#cdcdcd" stroke-width="0.75"/>
<line x1="750.57" y1="79.00" x2="750.57" y2="85.30" stroke="#cdcdcd" stroke-width="0.75"/>
<line x1="750.57" y1="105.00" x2="750.57" y2="111.30" stroke="#cdcdcd" stroke-width="0.75"/>
<line x1="750.57" y1="157.00" x2="750.57" y2="150.70" stroke="#cdcdcd" stroke-width="0.75"/>
<line x1="750.57" y1="183.00" x2="750.57" y2="176.70" stroke="#cdcdcd" stroke-width="0.75"/>
<line x1="758.85" y1="79.00" x2="758.85" y2="91.70" stroke="#cdcdcd" stroke-width="0.75"/>
<line x1="758.85" y1="105.00" x2="758.85" y2="117.70" stroke="#cdcdcd" stroke-width="0.75"/>
<line x1="758.85" y1="157.00" x2="758.85" y2="144.30" stroke="#cdcdcd" stroke-width="0.75"/>
<line x1="758.85" y1="183.00" x2="758.85" y2="170.30" stroke="#cdcdcd" stroke-width="0.75"/>
<line x1="767.12" y1="79.00" x2="767.12" y2="85.30" stroke="#cdcdcd" stroke-width="0.75"/>
<line x1="767.12" y1="105.00" x2="767.12" y2="111.30" stroke="#cdcdcd" stroke-width="0.75"/>
<line x1="767.12" y1="157.00" x2="767.12" y2="150.70" stroke="#cdcdcd" stroke-width="0.75"/>
<line x1="767.12" y1="183.00" x2="767.12" y2="176.70" stroke="#cdcdcd" stroke-width="0.75"/>
<line x1="783.67" y1="79.00" x2="783.67" y2="85.30" stroke="#cdcdcd" stroke-width="0.75"/>
<line x1="783.67" y1="105.00" x2="783.67" y2="111.30" stroke="#cdcdcd" stroke-width="0.75"/>
<line x1="783.67" y1="157.00" x2="783.67" y2="150.70" stroke="#cdcdcd" stroke-width="0.75"/>
<line x1="783.67" y1="183.00" x2="783.67" y2="176.70" stroke="#cdcdcd" stroke-width="0.75"/>
<line x1="791.95" y1="79.00" x2="791.95" y2="91.70" stroke="#cdcdcd" stroke-width="0.75"/>
<line x1="791.95" y1="105.00" x2="791.95" y2="117.70" stroke="#cdcdcd" stroke-width="0.75"/>
<line x1="791.95" y1="157.00" x2="791.95" y2="144.30" stroke="#cdcdcd" stroke-width="0.75"/>
<line x1="791.95" y1="183.00" x2="791.95" y2="170.30" stroke="#cdcdcd" stroke-width="0.75"/>
<line x1="800.23" y1="79.00" x2="800.23" y2="85.30" stroke="#cdcdcd" stroke-width="0.75"/>
<line x1="800.23" y1="105.00" x2="800.23" y2="111.30" stroke="#cdcdcd" stroke-width="0.75"/>
<line x1="800.23" y1="157.00" x2="800.23" y2="150.70" stroke="#cdcdcd" stroke-width="0.75"/>
<line x1="800.23" y1="183.00" x2="800.23" y2="176.70" stroke="#cdcdcd" stroke-width="0.75"/>
<line x1="816.77" y1="79.00" x2="816.77" y2="85.30" stroke="#cdcdcd" stroke-width="0.75"/>
<line x1="816.77" y1="105.00" x2="816.77" y2="111.30" stroke="#cdcdcd" stroke-width="0.75"/>
<line x1="816.77" y1="157.00" x2="816.77" y2="150.70" stroke="#cdcdcd" stroke-width="0.75"/>
<line x1="816.77" y1="183.00" x2="816.77" y2="176.70" stroke="#cdcdcd" stroke-width="0.75"/>
<line x1="825.05" y1="79.00" x2="825.05" y2="91.70" stroke="#cdcdcd" stroke-width="0.75"/>
<line x1="825.05" y1="105.00" x2="825.05" y2="117.70" stroke="#cdcdcd" stroke-width="0.75"/>
<line x1="825.05" y1="157.00" x2="825.05" y2="144.30" stroke="#cdcdcd" stroke-width="0.75"/>
<line x1="825.05" y1="183.00" x2="825.05" y2="170.30" stroke="#cdcdcd" stroke-width="0.75"/>
<line x1="833.32" y1="79.00" x2="833.32" y2="85.30" stroke="#cdcdcd" stroke-width="0.75"/>
<line x1="833.32" y1="105.00" x2="833.32" y2="111.30" stroke="#cdcdcd" stroke-width="0.75"/>
<line x1="833.32" y1="157.00" x2="833.32" y2="150.70" stroke="#cdcdcd" stroke-width="0.75"/>
<line x1="833.32" y1="183.00" x2="833.32" y2="176.70" stroke="#cdcdcd" stroke-width="0.75"/>
<line x1="849.88" y1="79.00" x2="849.88" y2="85.30" stroke="#cdcdcd" stroke-width="0.75"/>
<line x1="849.88" y1="105.00" x2="849.88" y2="111.30" stroke="#cdcdcd" stroke-width="0.75"/>
<line x1="849.88" y1="157.00" x2="849.88" y2="150.70" stroke="#cdcdcd" stroke-width="0.75"/>
<line x1="849.88" y1="183.00" x2="849.88" y2="176.70" stroke="#cdcdcd" stroke-width="0.75"/>
<line x1="858.15" y1="79.00" x2="858.15" y2="91.70" stroke="#cdcdcd" stroke-width="0.75"/>
<line x1="858.15" y1="105.00" x2="858.15" y2="117.70" stroke="#cdcdcd" stroke-width="0.75"/>
<line x1="858.15" y1="157.00" x2="858.15" y2="144.30" stroke="#cdcdcd" stroke-width="0.75"/>
<line x1="858.15" y1="183.00" x2="858.15" y2="170.30" stroke="#cdcdcd" stroke-width="0.75"/>
<line x1="866.42" y1="79.00" x2="866.42" y2="85.30" stroke="#cdcdcd" stroke-width="0.75"/>
<line x1="866.42" y1="105.00" x2="866.42" y2="111.30" stroke="#cdcdcd" stroke-width="0.75"/>
<line x1="866.42" y1="157.00" x2="866.42" y2="150.70" stroke="#cdcdcd" stroke-width="0.75"/>
<line x1="866.42" y1="183.00" x2="866.42" y2="176.70" stroke="#cdcdcd" stroke-width="0.75"/>
<text x="77.80" y="79.3" class="hl">M</text>
<text x="110.90" y="79.3" class="hl">1</text>
<text x="144.00" y="79.3" class="hl">2</text>
<text x="177.10" y="79.3" class="hl">3</text>
<text x="210.20" y="79.3" class="hl">4</text>
<text x="243.30" y="79.3" class="hl">5</text>
<text x="276.40" y="79.3" class="hl">6</text>
<text x="309.50" y="79.3" class="hl">7</text>
<text x="342.60" y="79.3" class="hl">8</text>
<text x="375.70" y="79.3" class="hl">9</text>
<text x="408.80" y="79.3" class="hl">10</text>
<text x="441.90" y="79.3" class="hl">11</text>
<text x="475.00" y="79.3" class="hl">N</text>
<text x="508.10" y="79.3" class="hl">1</text>
<text x="541.20" y="79.3" class="hl">2</text>
<text x="574.30" y="79.3" class="hl">3</text>
<text x="607.40" y="79.3" class="hl">4</text>
<text x="640.50" y="79.3" class="hl">5</text>
<text x="673.60" y="79.3" class="hl">6</text>
<text x="706.70" y="79.3" class="hl">7</text>
<text x="739.80" y="79.3" class="hl">8</text>
<text x="772.90" y="79.3" class="hl">9</text>
<text x="806.00" y="79.3" class="hl">10</text>
<text x="839.10" y="79.3" class="hl">11</text>
<text x="872.20" y="79.3" class="hl">M</text>
<text x="59.2" y="94.60" class="rl">OFF</text>
<text x="59.2" y="120.60" class="rl">SB</text>
<text x="59.2" y="146.60" class="rl">D</text>
<text x="59.2" y="172.60" class="rl">ON</text>
<text x="881.3" y="94.60" class="rl">0:00</text>
<text x="881.3" y="120.60" class="rl">0:00</text>
<text x="881.3" y="146.60" class="rl">2:22</text>
<text x="881.3" y="172.60" class="rl">21:38</text>
<line x1="80.30" y1="170.0" x2="377.10" y2="170.0" stroke="#8686e6" stroke-width="1.0"/>
<line x1="377.10" y1="144.4" x2="384.27" y2="144.4" stroke="#e22b2b" stroke-width="0.9"/>
<line x1="384.27" y1="170.0" x2="391.44" y2="170.0" stroke="#8686e6" stroke-width="1.0"/>
<line x1="391.44" y1="144.4" x2="423.44" y2="144.4" stroke="#e22b2b" stroke-width="0.9"/>
<line x1="423.44" y1="170.0" x2="470.88" y2="170.0" stroke="#8686e6" stroke-width="1.0"/>
<line x1="470.88" y1="144.4" x2="493.50" y2="144.4" stroke="#e22b2b" stroke-width="0.9"/>
<line x1="493.50" y1="170.0" x2="498.46" y2="170.0" stroke="#8686e6" stroke-width="1.0"/>
<line x1="498.46" y1="144.4" x2="501.77" y2="144.4" stroke="#e22b2b" stroke-width="0.9"/>
<line x1="501.77" y1="170.0" x2="693.48" y2="170.0" stroke="#8686e6" stroke-width="1.0"/>
<line x1="693.48" y1="144.4" x2="696.24" y2="144.4" stroke="#e22b2b" stroke-width="0.9"/>
<line x1="696.24" y1="170.0" x2="697.06" y2="170.0" stroke="#8686e6" stroke-width="1.0"/>
<line x1="697.06" y1="144.4" x2="697.89" y2="144.4" stroke="#e22b2b" stroke-width="0.9"/>
<line x1="697.89" y1="170.0" x2="698.99" y2="170.0" stroke="#8686e6" stroke-width="1.0"/>
<line x1="698.99" y1="144.4" x2="709.20" y2="144.4" stroke="#e22b2b" stroke-width="0.9"/>
<line x1="709.20" y1="170.0" x2="874.70" y2="170.0" stroke="#8686e6" stroke-width="1.0"/>
<line x1="377.10" y1="143.9" x2="377.10" y2="170.5" stroke="#8c8ce8" stroke-width="1.0"/>
<line x1="384.27" y1="143.9" x2="384.27" y2="170.5" stroke="#8c8ce8" stroke-width="1.0"/>
<line x1="391.44" y1="143.9" x2="391.44" y2="170.5" stroke="#8c8ce8" stroke-width="1.0"/>
<line x1="423.44" y1="143.9" x2="423.44" y2="170.5" stroke="#8c8ce8" stroke-width="1.0"/>
<line x1="470.88" y1="143.9" x2="470.88" y2="170.5" stroke="#8c8ce8" stroke-width="1.0"/>
<line x1="493.50" y1="143.9" x2="493.50" y2="170.5" stroke="#8c8ce8" stroke-width="1.0"/>
<line x1="498.46" y1="143.9" x2="498.46" y2="170.5" stroke="#8c8ce8" stroke-width="1.0"/>
<line x1="501.77" y1="143.9" x2="501.77" y2="170.5" stroke="#8c8ce8" stroke-width="1.0"/>
<line x1="693.48" y1="143.9" x2="693.48" y2="170.5" stroke="#8c8ce8" stroke-width="1.0"/>
<line x1="696.24" y1="143.9" x2="696.24" y2="170.5" stroke="#8c8ce8" stroke-width="1.0"/>
<line x1="697.06" y1="143.9" x2="697.06" y2="170.5" stroke="#8c8ce8" stroke-width="1.0"/>
<line x1="697.89" y1="143.9" x2="697.89" y2="170.5" stroke="#8c8ce8" stroke-width="1.0"/>
<line x1="698.99" y1="143.9" x2="698.99" y2="170.5" stroke="#8c8ce8" stroke-width="1.0"/>
<line x1="709.20" y1="143.9" x2="709.20" y2="170.5" stroke="#8c8ce8" stroke-width="1.0"/>
</svg>
<div class="abs hr" style="left:59.5px;top:210.4px;width:863px"></div>
<div class="abs h5" style="left:59.4px;top:226.8px">Violations</div>
<div class="abs bd" style="left:59.3px;width:62.6px;background:#f5001f">Driving Limit</div>
<div class="abs bx" style="left:121.9px;width:31.4px">11hr</div>
<div class="abs bd" style="left:160.8px;width:51.4px;background:#fb4f1c">Shift Limit</div>
<div class="abs bx" style="left:212.2px;width:31.6px">14hr</div>
<div class="abs bd" style="left:251.4px;width:56.6px;background:#fb9a23">Cycle Limit</div>
<div class="abs bx" style="left:308px;width:30.8px">60hr</div>
<div class="abs hr" style="left:59.5px;top:277.7px;width:863px"></div>
<div class="abs h5" style="left:59.6px;top:293.2px">Event Details</div>
<table>
<colgroup><col style="width:164.2px"><col style="width:164px"><col style="width:164px"><col style="width:164px"><col style="width:164px"><col style="width:42.8px"></colgroup>
<thead><tr><th>Status</th><th>Start</th><th>Duration</th><th>Location</th><th>Note</th><th>Edit</th></tr></thead>
<tbody>
<tr><td>On Duty</td><td>00:00 AM</td><td>8 h 58 m</td><td></td><td></td><td class="ec"><span class="eb">Edit</span></td></tr>
<tr><td>Driving</td><td>08:58 AM</td><td>13 m</td><td></td><td></td><td class="ec"><span class="eb">Edit</span></td></tr>
<tr><td>On Duty</td><td>09:11 AM</td><td>13 m</td><td></td><td></td><td class="ec"><span class="eb">Edit</span></td></tr>
<tr><td>Driving</td><td>09:24 AM</td><td>58 m</td><td></td><td></td><td class="ec"><span class="eb">Edit</span></td></tr>
<tr><td>On Duty</td><td>10:22 AM</td><td>1 h 26 m</td><td></td><td></td><td class="ec"><span class="eb">Edit</span></td></tr>
<tr><td>Driving</td><td>11:48 AM</td><td>41 m</td><td></td><td></td><td class="ec"><span class="eb">Edit</span></td></tr>
<tr><td>On Duty</td><td>12:29 PM</td><td>9 m</td><td></td><td></td><td class="ec"><span class="eb">Edit</span></td></tr>
<tr><td>Driving</td><td>12:38 PM</td><td>6 m</td><td></td><td></td><td class="ec"><span class="eb">Edit</span></td></tr>
<tr><td>On Duty</td><td>12:44 PM</td><td>5 h 48 m</td><td></td><td></td><td class="ec"><span class="eb">Edit</span></td></tr>
</tbody></table>
</div></body></html>
